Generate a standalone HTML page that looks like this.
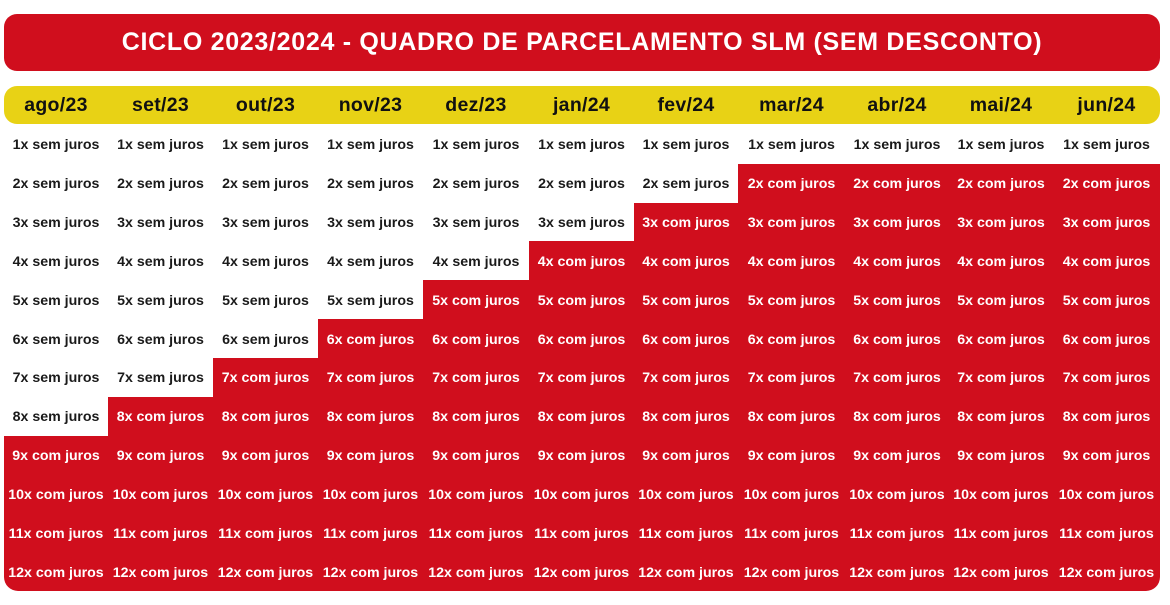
<!DOCTYPE html>
<html><head><meta charset="utf-8"><style>
*{margin:0;padding:0;box-sizing:border-box}
body{width:1170px;height:605px;background:#fff;position:relative;overflow:hidden;font-family:"Liberation Sans",Arial,sans-serif;font-weight:bold}
.title{position:absolute;left:4px;top:14px;width:1156px;height:57px;background:#d00e1d;border-radius:13px;color:#fff;font-size:25px;text-align:center;line-height:57px;letter-spacing:0.7px}
.months{position:absolute;left:4px;top:86px;width:1156px;height:38px;background:#e8d215;border-radius:13px;display:grid;grid-template-columns:104px 105px 105px 105px 106px 105px 104px 107px 104px 104px 107px}
.months div{text-align:center;line-height:38px;font-size:19.5px;color:#111;letter-spacing:0.3px}
.grid{position:absolute;left:4px;top:125px;width:1156px;height:466px;display:grid;grid-template-columns:104px 105px 105px 105px 106px 105px 104px 107px 104px 104px 107px;grid-template-rows:repeat(12,1fr);border-radius:0 0 14px 14px;overflow:hidden}
.grid div{text-align:center;font-size:14.2px;color:#1a1a1a;display:flex;align-items:center;justify-content:center;white-space:nowrap;letter-spacing:0px;padding-top:2px}
.grid div.r{background:#d00e1d;color:#fff}
</style></head><body>
<div class="title">CICLO 2023/2024 - QUADRO DE PARCELAMENTO SLM (SEM DESCONTO)</div>
<div class="months"><div>ago/23</div><div>set/23</div><div>out/23</div><div>nov/23</div><div>dez/23</div><div>jan/24</div><div>fev/24</div><div>mar/24</div><div>abr/24</div><div>mai/24</div><div>jun/24</div></div>
<div class="grid">
<div>1x sem juros</div><div>1x sem juros</div><div>1x sem juros</div><div>1x sem juros</div><div>1x sem juros</div><div>1x sem juros</div><div>1x sem juros</div><div>1x sem juros</div><div>1x sem juros</div><div>1x sem juros</div><div>1x sem juros</div>
<div>2x sem juros</div><div>2x sem juros</div><div>2x sem juros</div><div>2x sem juros</div><div>2x sem juros</div><div>2x sem juros</div><div>2x sem juros</div><div class="r">2x com juros</div><div class="r">2x com juros</div><div class="r">2x com juros</div><div class="r">2x com juros</div>
<div>3x sem juros</div><div>3x sem juros</div><div>3x sem juros</div><div>3x sem juros</div><div>3x sem juros</div><div>3x sem juros</div><div class="r">3x com juros</div><div class="r">3x com juros</div><div class="r">3x com juros</div><div class="r">3x com juros</div><div class="r">3x com juros</div>
<div>4x sem juros</div><div>4x sem juros</div><div>4x sem juros</div><div>4x sem juros</div><div>4x sem juros</div><div class="r">4x com juros</div><div class="r">4x com juros</div><div class="r">4x com juros</div><div class="r">4x com juros</div><div class="r">4x com juros</div><div class="r">4x com juros</div>
<div>5x sem juros</div><div>5x sem juros</div><div>5x sem juros</div><div>5x sem juros</div><div class="r">5x com juros</div><div class="r">5x com juros</div><div class="r">5x com juros</div><div class="r">5x com juros</div><div class="r">5x com juros</div><div class="r">5x com juros</div><div class="r">5x com juros</div>
<div>6x sem juros</div><div>6x sem juros</div><div>6x sem juros</div><div class="r">6x com juros</div><div class="r">6x com juros</div><div class="r">6x com juros</div><div class="r">6x com juros</div><div class="r">6x com juros</div><div class="r">6x com juros</div><div class="r">6x com juros</div><div class="r">6x com juros</div>
<div>7x sem juros</div><div>7x sem juros</div><div class="r">7x com juros</div><div class="r">7x com juros</div><div class="r">7x com juros</div><div class="r">7x com juros</div><div class="r">7x com juros</div><div class="r">7x com juros</div><div class="r">7x com juros</div><div class="r">7x com juros</div><div class="r">7x com juros</div>
<div>8x sem juros</div><div class="r">8x com juros</div><div class="r">8x com juros</div><div class="r">8x com juros</div><div class="r">8x com juros</div><div class="r">8x com juros</div><div class="r">8x com juros</div><div class="r">8x com juros</div><div class="r">8x com juros</div><div class="r">8x com juros</div><div class="r">8x com juros</div>
<div class="r">9x com juros</div><div class="r">9x com juros</div><div class="r">9x com juros</div><div class="r">9x com juros</div><div class="r">9x com juros</div><div class="r">9x com juros</div><div class="r">9x com juros</div><div class="r">9x com juros</div><div class="r">9x com juros</div><div class="r">9x com juros</div><div class="r">9x com juros</div>
<div class="r">10x com juros</div><div class="r">10x com juros</div><div class="r">10x com juros</div><div class="r">10x com juros</div><div class="r">10x com juros</div><div class="r">10x com juros</div><div class="r">10x com juros</div><div class="r">10x com juros</div><div class="r">10x com juros</div><div class="r">10x com juros</div><div class="r">10x com juros</div>
<div class="r">11x com juros</div><div class="r">11x com juros</div><div class="r">11x com juros</div><div class="r">11x com juros</div><div class="r">11x com juros</div><div class="r">11x com juros</div><div class="r">11x com juros</div><div class="r">11x com juros</div><div class="r">11x com juros</div><div class="r">11x com juros</div><div class="r">11x com juros</div>
<div class="r">12x com juros</div><div class="r">12x com juros</div><div class="r">12x com juros</div><div class="r">12x com juros</div><div class="r">12x com juros</div><div class="r">12x com juros</div><div class="r">12x com juros</div><div class="r">12x com juros</div><div class="r">12x com juros</div><div class="r">12x com juros</div><div class="r">12x com juros</div>
</div>
</body></html>
